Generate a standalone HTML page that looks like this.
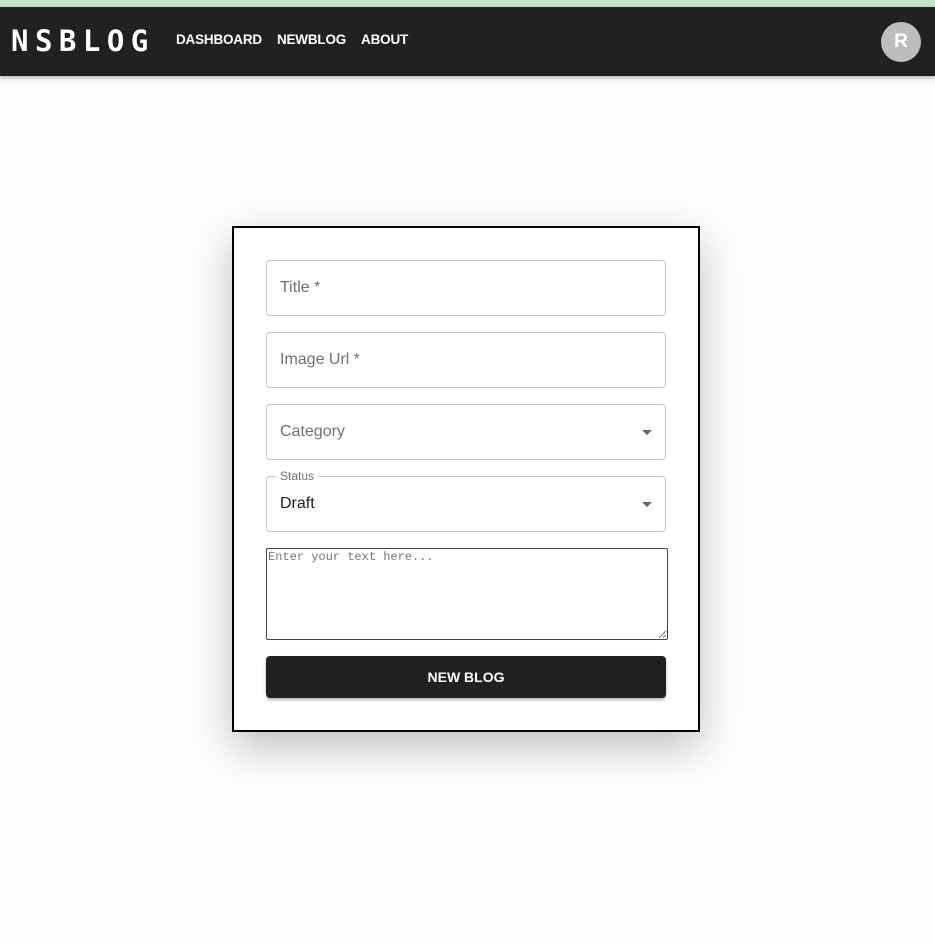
<!DOCTYPE html>
<html><head><meta charset="utf-8"><style>
*{box-sizing:border-box;margin:0;padding:0}
body{width:935px;height:944px;background:#fdfdfd;font-family:"Liberation Sans",sans-serif;position:relative;overflow:hidden}
.top{position:absolute;left:0;top:0;width:935px;height:7px;background:#c5e1c8}
.nav{position:absolute;left:0;top:7px;width:935px;height:69px;background:#212121;box-shadow:0 2px 4px rgba(0,0,0,.3)}
.logo{position:absolute;left:11px;top:17px;color:#fff;font:bold 29px "DejaVu Sans Mono","Liberation Mono",monospace;letter-spacing:6.5px}
.links{position:absolute;left:176px;top:25px;color:#fff;font-weight:bold;font-size:13.5px;letter-spacing:-0.2px}
.links span{margin-right:15px}
.av{position:absolute;left:881px;top:15px;width:40px;height:40px;border-radius:50%;background:#bdbdbd;color:#fff;font-size:19px;font-weight:bold;text-align:center;line-height:40px}
.card{position:absolute;left:232px;top:226px;width:468px;height:506px;border:2px solid #000;background:#fff;box-shadow:0 15px 40px rgba(0,0,0,.25)}
.f{position:absolute;left:266px;width:400px;height:56px;border:1px solid #c4c4c4;border-radius:4px;color:#707070;font-size:16px;padding:18px 13px}
.arr{position:absolute;right:13px;top:25px;border:5px solid transparent;border-top-color:#666;border-bottom:0}
.lbl{position:absolute;left:9px;top:-8px;background:#fff;padding:0 4px;font-size:12px;color:#707070}
textarea{position:absolute;left:266px;top:548px;width:402px;height:92px;border:1px solid #444;border-radius:2px;font:12px "Liberation Mono",monospace;resize:both;padding:1px}
.btn{position:absolute;left:266px;top:656px;width:400px;height:42px;background:#212121;border-radius:4px;color:#fff;font-weight:bold;font-size:14px;text-align:center;line-height:42px;box-shadow:0 2px 3px rgba(0,0,0,.3)}
</style></head><body>
<div class="top"></div>
<div class="nav"><div class="logo">NSBLOG</div><div class="links"><span>DASHBOARD</span><span>NEWBLOG</span><span>ABOUT</span></div><div class="av">R</div></div>
<div class="card"></div>
<div class="f" style="top:260px">Title *</div>
<div class="f" style="top:332px">Image Url *</div>
<div class="f" style="top:404px">Category<div class="arr"></div></div>
<div class="f" style="top:476px;color:#222"><div class="lbl">Status</div>Draft<div class="arr"></div></div>
<textarea placeholder="Enter your text here..."></textarea>
<div class="btn">NEW BLOG</div>
</body></html>
